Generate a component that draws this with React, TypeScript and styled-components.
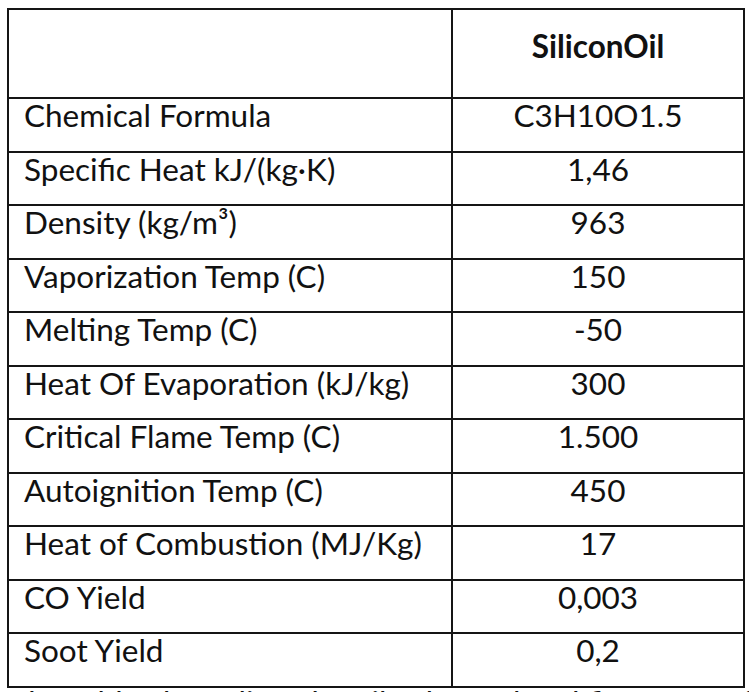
import React from 'react'
import styled, { createGlobalStyle } from 'styled-components'

const GlobalStyle = createGlobalStyle`
  html, body {
    margin: 0;
    padding: 0;
    background: #ffffff;
  }
  body {
    font-family: Lato, "Open Sans", "Liberation Sans", sans-serif;
    color: #111111;
    overflow: hidden;
  }
`

const Page = styled.div`
  padding: 8px 0 0 7px;
  width: 749px;
  height: 692px;
  box-sizing: border-box;
`

const Table = styled.table`
  border-collapse: collapse;
  width: 736px;
  table-layout: fixed;
`

const HeadRow = styled.tr`
  height: 89px;
`

const Row = styled.tr`
  height: 53.5px;
`

const Cell = styled.td<{ $center?: boolean; $bold?: boolean }>`
  border: 2px solid #151515;
  padding: 0 0 0 ${(p) => (p.$center ? '0' : '15px')};
  vertical-align: top;
  font-size: 31.5px;
  line-height: 33px;
  text-align: ${(p) => (p.$center ? 'center' : 'left')};
  font-weight: ${(p) => (p.$bold ? 700 : 400)};
  white-space: nowrap;
`

const HeadCell = styled(Cell)`
  vertical-align: middle;
  padding: 0 0 14px 0;
`

const Trailing = styled.p`
  margin: -2px 0 0 0;
  padding: 0 0 0 10px;
  font-size: 31.5px;
  line-height: 32px;
  white-space: nowrap;
`

const rows: [string, string][] = [
  ['Chemical Formula', 'C3H10O1.5'],
  ['Specific Heat kJ/(kg·K)', '1,46'],
  ['Density (kg/m³)', '963'],
  ['Vaporization Temp (C)', '150'],
  ['Melting Temp (C)', '-50'],
  ['Heat Of Evaporation (kJ/kg)', '300'],
  ['Critical Flame Temp (C)', '1.500'],
  ['Autoignition Temp (C)', '450'],
  ['Heat of Combustion (MJ/Kg)', '17'],
  ['CO Yield', '0,003'],
  ['Soot Yield', '0,2'],
]

export default function App() {
  return (
    <>
      <GlobalStyle />
      <Page>
        <Table>
          <colgroup>
            <col style={{ width: 444 }} />
            <col style={{ width: 292 }} />
          </colgroup>
          <tbody>
            <HeadRow>
              <HeadCell />
              <HeadCell $center $bold>SiliconOil</HeadCell>
            </HeadRow>
            {rows.map(([label, value]) => (
              <Row key={label}>
                <Cell>{label}</Cell>
                <Cell $center>{value}</Cell>
              </Row>
            ))}
          </tbody>
        </Table>
        <Trailing>the table above lists the oil's thermal and fire properties</Trailing>
      </Page>
    </>
  )
}
